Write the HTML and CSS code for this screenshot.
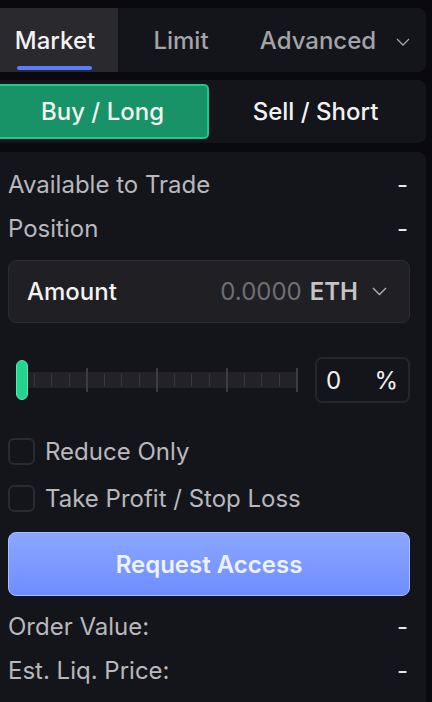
FILE: index.html
```html
<!DOCTYPE html>
<html lang="en">
<head>
    <meta charset="UTF-8">
    <meta name="viewport" content="width=device-width, initial-scale=1.0">
    <title>Order Form</title>
    <link rel="stylesheet" href="styles.css">
</head>
<body>
    <div class="order-form">
        <div class="panel tabs">
            <div class="tab active">Market</div>
            <div class="tab">Limit</div>
            <div class="tab tab-more">
                Advanced
                <svg class="chev" width="14" height="8" viewBox="0 0 14 8"><path d="M1 1l6 6 6-6" fill="none" stroke="currentColor" stroke-width="1.3"/></svg>
            </div>
        </div>

        <div class="panel side-toggle">
            <button class="side buy selected">Buy / Long</button>
            <button class="side sell">Sell / Short</button>
        </div>

        <div class="panel body">
            <div class="info-row first">
                <span>Available to Trade</span>
                <span class="val">-</span>
            </div>
            <div class="info-row">
                <span>Position</span>
                <span class="val">-</span>
            </div>

            <div class="amount">
                <span class="amount-label">Amount</span>
                <span class="amount-value">0.0000</span>
                <span class="amount-unit">ETH</span>
                <svg class="chev" width="15" height="9" viewBox="0 0 15 9"><path d="M1 1l6.5 6.5L14 1" fill="none" stroke="currentColor" stroke-width="1.4"/></svg>
            </div>

            <div class="slider-row">
                <div class="slider" id="slider">
                    <div class="track"></div>
                    <div class="thumb"></div>
                </div>
                <div class="pct">
                    <span>0</span>
                    <span>%</span>
                </div>
            </div>

            <label class="check first-check">
                <span class="box"></span>
                Reduce Only
            </label>
            <label class="check">
                <span class="box"></span>
                Take Profit / Stop Loss
            </label>

            <button class="submit">Request Access</button>

            <div class="info-row summary">
                <span>Order Value:</span>
                <span class="val">-</span>
            </div>
            <div class="info-row summary">
                <span>Est. Liq. Price:</span>
                <span class="val">-</span>
            </div>
        </div>
    </div>

    <script>
        // tick marks on the leverage slider: 16 steps, every 4th is a big one
        const slider = document.getElementById('slider');
        for (let i = 1; i <= 16; i++) {
            const tick = document.createElement('div');
            tick.className = i % 4 === 0 ? 'tick major' : 'tick';
            tick.style.left = (i / 16 * 100) + '%';
            slider.appendChild(tick);
        }
    </script>
</body>
</html>
```

FILE: styles.css
```css
* {
    box-sizing: border-box;
}
body {
    margin: 0;
    background-color: #0a0a0e;
    font-family: Inter, "Noto Sans", sans-serif;
    overflow: hidden;
}
.order-form {
    margin-left: -8px;
    width: 434px;
    padding-top: 8px;
}
.panel {
    background-color: #14151a;
    border-radius: 8px;
    margin-bottom: 8px;
}

/* order type tabs */
.tabs {
    display: flex;
    height: 64px;
    overflow: hidden;
}
.tab {
    width: 126px;
    display: flex;
    justify-content: center;
    align-items: center;
    font-size: 24px;
    font-weight: 500;
    color: #a3a3a8;
    position: relative;
}
.tab.active {
    background-color: #29292e;
    color: #f2f2f2;
}
.tab.active::after {
    content: '';
    position: absolute;
    left: 25px;
    right: 26px;
    bottom: 2px;
    height: 4px;
    border-radius: 2px;
    background-color: #5b7cff;
}
.tab-more {
    flex: 1;
    gap: 20px;
    padding-left: 0;
}
.tab-more .chev {
    color: #a3a3a8;
    margin-top: 4px;
}

/* buy / sell */
.side-toggle {
    display: flex;
    height: 63px;
    padding: 4px;
    margin-bottom: 9px;
}
.side {
    flex: 1;
    border: 2px solid transparent;
    border-radius: 5px;
    background: none;
    font-family: inherit;
    font-size: 24px;
    font-weight: 500;
    color: #f2f2f2;
    cursor: pointer;
}
.side.buy.selected {
    background-color: #179367;
    border-color: #1fc98c;
}

/* main form */
.body {
    padding: 10px 16px 20px;
    height: 560px;
}
.info-row {
    display: flex;
    justify-content: space-between;
    align-items: center;
    height: 44px;
    font-size: 24px;
    color: #b8b8bd;
}
.info-row .val {
    color: #e8e8ea;
    padding-right: 2px;
}
.amount {
    display: flex;
    align-items: center;
    height: 63px;
    margin-top: 10px;
    padding: 0 22px 0 18px;
    background-color: #1f1f24;
    border: 1px solid #2b2b30;
    border-radius: 8px;
    font-size: 24px;
}
.amount-label {
    color: #f2f2f2;
    flex: 1;
    font-weight: 500;
}
.amount-value {
    color: #6f6f75;
}
.amount-unit {
    color: #c4c4c8;
    font-weight: 600;
    margin-left: 8px;
    margin-right: 14px;
}
.amount .chev {
    color: #b0b0b5;
}

/* slider */
.slider-row {
    display: flex;
    align-items: center;
    justify-content: space-between;
    margin-top: 34px;
}
.slider {
    position: relative;
    width: 280px;
    height: 40px;
    margin-left: 9px;
}
.track {
    position: absolute;
    left: 11px;
    right: 0;
    top: 12px;
    height: 16px;
    background-color: #222227;
}
.tick {
    position: absolute;
    top: 14px;
    width: 1px;
    height: 12px;
    background-color: #38383e;
    transform: translateX(-1px);
}
.tick.major {
    top: 8px;
    height: 24px;
    width: 2px;
    background-color: #3c3c42;
}
.thumb {
    position: absolute;
    left: -1px;
    top: 0;
    width: 12px;
    height: 40px;
    border-radius: 6px;
    background-color: #22d48e;
    border: 1px solid #5ee4ae;
}
.pct {
    width: 95px;
    height: 46px;
    border: 2px solid #25252a;
    border-radius: 7px;
    display: flex;
    align-items: center;
    justify-content: space-between;
    padding: 0 10px 0 9px;
    font-size: 24px;
    color: #f2f2f2;
}

/* checkboxes */
.check {
    display: flex;
    align-items: center;
    gap: 10px;
    height: 47px;
    font-size: 24px;
    color: #b8b8bd;
}
.first-check {
    margin-top: 25px;
}
.box {
    width: 27px;
    height: 27px;
    border: 2px solid #2a2a2f;
    border-radius: 6px;
}

/* submit */
.submit {
    display: block;
    width: 100%;
    height: 64px;
    margin-top: 10px;
    margin-bottom: 8px;
    border: 1px solid #a9bcff;
    border-radius: 8px;
    background: linear-gradient(#8aa7ff, #6f8dff);
    font-family: inherit;
    font-size: 24px;
    font-weight: 600;
    color: #eef2ff;
    cursor: pointer;
}
.summary {
    font-size: 24px;
}
```
